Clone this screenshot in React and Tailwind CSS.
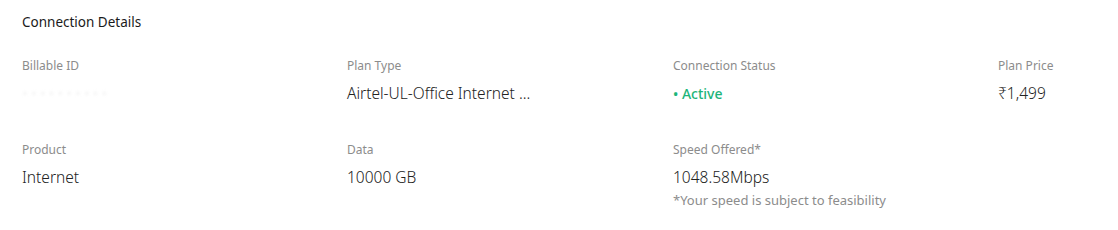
import React from "react";

const Field = ({ label, children }) => (
  <div className="flex flex-col">
    <div className="text-[12px] leading-[16px] text-[#8c8c8c]">{label}</div>
    <div className="mt-[9px] text-[15.5px] leading-[20px] font-light text-[#222222]">{children}</div>
  </div>
);

export default function App() {
  return (
    <div
      className="w-[1118px] h-[230px] bg-white px-[22px] pt-[13px]"
      style={{ fontFamily: '"Noto Sans", "Open Sans", sans-serif' }}
    >
      <div className="text-[13.5px] leading-[18px] text-[#1a1a1a]">Connection Details</div>
      <div className="mt-[27px] grid grid-cols-[325px_326px_325px_1fr] gap-y-[38px]">
        <Field label="Billable ID">
          <span className="text-[#f0f0f0] blur-[1.5px] select-none tracking-[3px]">••••••••••</span>
        </Field>
        <Field label="Plan Type">Airtel-UL-Office Internet ...</Field>
        <Field label="Connection Status">
          <span className="text-[14px] font-medium text-[#1db57a]">• Active</span>
        </Field>
        <Field label="Plan Price">₹1,499</Field>
        <Field label="Product">Internet</Field>
        <Field label="Data">10000 GB</Field>
        <div className="flex flex-col">
          <div className="text-[12px] leading-[16px] text-[#8c8c8c]">Speed Offered*</div>
          <div className="mt-[9px] text-[15.5px] leading-[20px] font-light text-[#222222]">1048.58Mbps</div>
          <div className="mt-[4px] text-[13px] leading-[18px] text-[#8c8c8c]">*Your speed is subject to feasibility</div>
        </div>
        <div />
      </div>
    </div>
  );
}
